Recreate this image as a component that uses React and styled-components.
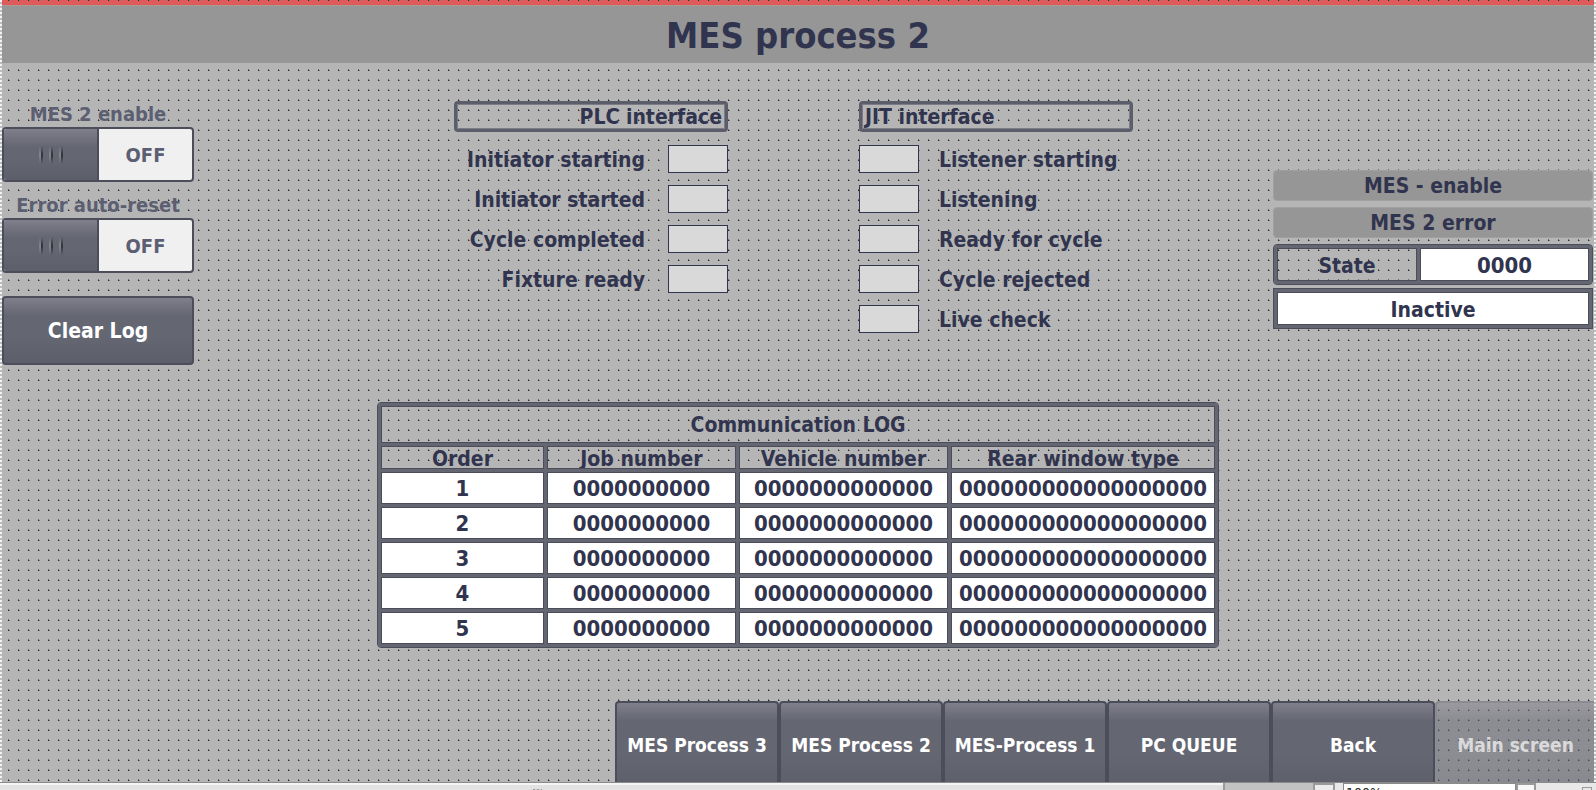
import React, { useState } from "react";
import styled, { createGlobalStyle, css } from "styled-components";

const color = {
  screen: "#b5b5b5",
  bar: "#969696",
  ink: "#31344e",
  muted: "#5c5f72",
  frame: "#646672",
  edge: "#4b4d5b",
  lamp: "#d9d9d9",
};

const dots = css`
  background-image:
    conic-gradient(at 1px 1px, transparent 75%, #2c2c2c 0),
    conic-gradient(at 2px 1px, transparent 75%, #7c7c7c 0),
    conic-gradient(at 1px 1px, transparent 75%, #6c6c6c 0);
  background-size: 10px 10px;
  background-position: 8px 0, 8px 0, 8px 9px;
`;

const steel = css`
  background: linear-gradient(#807f8b 0, #646672 18px, #646672 60%, #5c5e6a 100%);
`;

const GlobalStyle = createGlobalStyle`
  *, *::before, *::after { box-sizing: border-box; }
  body {
    margin: 0;
    font-family: "DejaVu Sans Condensed", "DejaVu Sans", sans-serif;
    font-size: 21px;
    line-height: 28px;
    font-weight: 700;
    color: ${color.ink};
    background: ${color.screen};
  }
  button, input {
    font: inherit;
  }
`;

const Screen = styled.div`
  position: relative;
  display: flex;
  flex-direction: column;
  min-height: 100vh;
  background-color: ${color.screen};
  ${dots}
  &::before,
  &::after {
    content: "";
    position: absolute;
    top: 0;
    bottom: 8px;
    width: 2px;
    background: repeating-linear-gradient(#f4f4f4 0 2px, #bcbcbc 2px 4px);
  }
  &::before { left: 0; }
  &::after { right: 0; }
`;

const AlarmStrip = styled.div`
  height: 5px;
  background-color: #df5a5a;
  ${dots}
`;

const Title = styled.h1`
  margin: 0;
  padding: 10px 0 8px;
  border-top: 1px solid #a89a90;
  background: ${color.bar};
  font-size: 36px;
  line-height: 39px;
  text-align: center;
`;

const Panels = styled.main`
  display: grid;
  grid-template-columns: 1fr auto 1fr;
  padding: 38px 3px 0 2px;
`;

const Controls = styled.section`
  display: flex;
  flex-direction: column;
  align-items: flex-start;
`;

const SwitchLabel = styled.span`
  width: 192px;
  height: 26px;
  line-height: 26px;
  text-align: center;
  font-size: 20px;
  color: ${color.muted};
`;

const Switch = styled.button`
  display: flex;
  flex-direction: ${(p) => (p.$on ? "row-reverse" : "row")};
  width: 192px;
  height: 55px;
  margin-bottom: 10px;
  padding: 0;
  border: 2px solid ${color.edge};
  border-radius: 4px;
  background: #f0f0f0;
  color: ${color.muted};
  overflow: hidden;
`;

const Thumb = styled.span`
  display: flex;
  flex: 1;
  align-self: stretch;
  align-items: center;
  justify-content: center;
  gap: 6px;
  border-right: 2px solid ${color.edge};
  ${steel}
`;

const Grip = styled.span`
  width: 4px;
  height: 18px;
  background:
    linear-gradient(#646672, transparent 50%, #616370),
    linear-gradient(90deg, #85858f 50%, #2f3038 50%);
`;

const SwitchState = styled.span`
  flex: 1;
  align-self: center;
  text-align: center;
  font-size: 20px;
`;

const SteelButton = styled.button`
  width: 192px;
  height: 69px;
  margin-top: 13px;
  padding: 0;
  border: 2px solid ${color.edge};
  border-radius: 4px;
  ${steel}
  color: #fff;
`;

const Interfaces = styled.section`
  display: grid;
  grid-template-columns: 274px 274px;
  column-gap: 131px;
  padding-right: 8px;
`;

const Signals = styled.ul`
  display: flex;
  flex-direction: column;
  gap: 12px;
  margin: 13px 0 0;
  padding: 0;
  list-style: none;
`;

const SignalTitle = styled.h2`
  margin: 0;
  height: 31px;
  padding: 0 3px;
  border: 3px solid #5c5d6b;
  border-radius: 4px;
  box-shadow: inset 0 0 0 1px #7b7c87;
  font-size: 21px;
  line-height: 26px;
  text-align: ${(p) => (p.$mirror ? "left" : "right")};
`;

const Signal = styled.li`
  display: flex;
  flex-direction: ${(p) => (p.$mirror ? "row" : "row-reverse")};
  gap: ${(p) => (p.$mirror ? "20px" : "23px")};
  height: 28px;
  line-height: 30px;
  white-space: nowrap;
`;

const Lamp = styled.span`
  width: 60px;
  height: 28px;
  border: 1px solid ${color.ink};
  background: ${color.lamp};
`;

const Status = styled.section`
  justify-self: end;
  width: 320px;
  padding-top: 69px;
  text-align: center;
`;

const Badge = styled.div`
  height: 31px;
  margin-bottom: 6px;
  border: 1px solid #a0a0a0;
  border-radius: 4px;
  background: ${color.bar};
  line-height: 31px;
`;

const framedCell = css`
  border: 1px solid ${color.edge};
  box-shadow: 0 0 0 3px ${color.frame};
  background: ${(p) => (p.$filled ? "#fff" : "transparent")};
`;

const Frame = styled.div`
  display: grid;
  grid-template-columns: ${(p) => p.$columns};
  gap: 3px;
  height: 41px;
  margin-bottom: 3px;
  padding: 3px;
  border: 1px solid ${color.edge};
  border-radius: ${(p) => (p.$square ? "0" : "4px")};
`;

const FrameCell = styled.span`
  ${framedCell}
  height: 33px;
  font-size: ${(p) => (p.$digits ? "22px" : "21px")};
  line-height: 34px;
`;

const Log = styled.table`
  width: 842px;
  margin: 37px auto 40px;
  table-layout: fixed;
  border: 1px solid ${color.edge};
  border-radius: 4px;
  border-collapse: separate;
  border-spacing: 3px;
  text-align: center;
`;

const Column = styled.col`
  width: ${(p) => p.$width}px;
`;

const LogTitle = styled.th`
  ${framedCell}
  height: 37px;
  padding: 0;
`;

const LogHead = styled.th`
  ${framedCell}
  height: 23px;
  padding: 0;
`;

const HeadText = styled.div`
  height: 21px;
  overflow: hidden;
  line-height: 24px;
`;

const LogCell = styled.td`
  ${framedCell}
  height: 32px;
  padding: 2px 0 0;
  font-size: 22px;
  line-height: 28px;
`;

const Nav = styled.nav`
  display: flex;
  justify-content: flex-end;
  height: 81px;
  margin-top: auto;
  padding-right: 2px;
  overflow: hidden;
`;

const NavButton = styled.button`
  width: ${(p) => (p.disabled ? "159px" : "164px")};
  height: 90px;
  padding: 0 0 2px;
  border: 2px solid ${color.edge};
  border-radius: 4px;
  ${steel}
  color: #fff;
  font-size: 19px;
  white-space: nowrap;
  &:disabled {
    border-right: 0;
    border-radius: 4px 0 0 0;
    border-color: #62646f;
    opacity: 0.5;
  }
`;

const EditorBar = styled.footer`
  display: flex;
  align-items: flex-start;
  height: 8px;
  border-top: 1px solid #8a8a8a;
  background: #e8e8e8;
  overflow: hidden;
`;

const ScrollTrack = styled.div`
  flex: 1;
  display: flex;
  height: 20px;
  background: #c2c2c2;
`;

const ScrollThumb = styled.div`
  display: flex;
  flex: 1;
  margin-right: 88px;
  padding: 6px 0 0 533px;
  border-right: 2px solid #9a9a9a;
  background: linear-gradient(#f5f5f5 2px, #e2e2e2 2px);
`;

const ThumbGrip = styled.span`
  width: 9px;
  height: 8px;
  background: repeating-linear-gradient(90deg, #9a9a9a 0 2px, #d0d0d0 2px 4px);
`;

const ScrollArrow = styled.button`
  width: 22px;
  height: 20px;
  margin-right: 8px;
  padding: 0;
  border: 2px solid #9a9a9a;
  background: #ececec;
`;

const Zoom = styled.input`
  width: 173px;
  height: 20px;
  padding: 0 2px;
  border: 1px solid #8a8a8a;
  background: #fff;
  color: #222;
  font-size: 14px;
  line-height: 18px;
  font-weight: 400;
`;

const ZoomStep = styled.button`
  width: 20px;
  height: 20px;
  margin-right: 46px;
  padding: 0;
  border: 2px solid #9a9a9a;
  background: #f8f8f8;
`;

const Corner = styled.span`
  width: 10px;
  height: 10px;
  margin: 4px 4px 0 0;
  border: 1px solid #9a9a9a;
`;

const plcSignals = ["Initiator starting", "Initiator started", "Cycle completed", "Fixture ready"];
const jitSignals = ["Listener starting", "Listening", "Ready for cycle", "Cycle rejected", "Live check"];
const columns = [
  { name: "Order", width: 163 },
  { name: "Job number", width: 189 },
  { name: "Vehicle number", width: 209 },
  { name: "Rear window type", width: 264 },
];
const entries = [1, 2, 3, 4, 5].map((n) => [n, "0".repeat(10), "0".repeat(13), "0".repeat(18)]);
const screens = ["MES Process 3", "MES Process 2", "MES-Process 1", "PC QUEUE", "Back"];

function ToggleSwitch({ id, label }) {
  const [on, setOn] = useState(false);
  return (
    <>
      <SwitchLabel id={id}>{label}</SwitchLabel>
      <Switch type="button" role="switch" aria-checked={on} aria-labelledby={id} $on={on} onClick={() => setOn(!on)}>
        <Thumb>
          <Grip />
          <Grip />
          <Grip />
        </Thumb>
        <SwitchState>{on ? "ON" : "OFF"}</SwitchState>
      </Switch>
    </>
  );
}

function SignalGroup({ title, signals, mirror }) {
  return (
    <div>
      <SignalTitle $mirror={mirror}>{title}</SignalTitle>
      <Signals>
        {signals.map((name) => (
          <Signal key={name} $mirror={mirror}>
            <Lamp />
            <span>{name}</span>
          </Signal>
        ))}
      </Signals>
    </div>
  );
}

export default function App() {
  return (
    <>
      <GlobalStyle />
      <Screen>
        <AlarmStrip />
        <Title>MES process 2</Title>
        <Panels>
          <Controls>
            <ToggleSwitch id="mes-enable" label="MES 2 enable" />
            <ToggleSwitch id="auto-reset" label="Error auto-reset" />
            <SteelButton type="button">Clear Log</SteelButton>
          </Controls>
          <Interfaces>
            <SignalGroup title="PLC interface" signals={plcSignals} />
            <SignalGroup title="JIT interface" signals={jitSignals} mirror />
          </Interfaces>
          <Status>
            <Badge>MES - enable</Badge>
            <Badge>MES 2 error</Badge>
            <Frame $columns="140px 1fr">
              <FrameCell>State</FrameCell>
              <FrameCell $filled $digits>0000</FrameCell>
            </Frame>
            <Frame $columns="1fr" $square>
              <FrameCell $filled>Inactive</FrameCell>
            </Frame>
          </Status>
        </Panels>
        <Log>
          <colgroup>
            {columns.map((c) => (
              <Column key={c.name} $width={c.width} />
            ))}
          </colgroup>
          <thead>
            <tr>
              <LogTitle colSpan={4}>Communication LOG</LogTitle>
            </tr>
            <tr>
              {columns.map((c) => (
                <LogHead key={c.name} scope="col">
                  <HeadText>{c.name}</HeadText>
                </LogHead>
              ))}
            </tr>
          </thead>
          <tbody>
            {entries.map((row) => (
              <tr key={row[0]}>
                {row.map((value, i) => (
                  <LogCell key={columns[i].name} $filled>
                    {value}
                  </LogCell>
                ))}
              </tr>
            ))}
          </tbody>
        </Log>
        <Nav>
          {screens.map((name) => (
            <NavButton key={name} type="button">
              {name}
            </NavButton>
          ))}
          <NavButton type="button" disabled>
            Main screen
          </NavButton>
        </Nav>
        <EditorBar>
          <ScrollTrack>
            <ScrollThumb>
              <ThumbGrip />
            </ScrollThumb>
          </ScrollTrack>
          <ScrollArrow type="button" aria-label="Scroll right" />
          <Zoom aria-label="Zoom" defaultValue="100%" />
          <ZoomStep type="button" aria-label="Zoom list" />
          <Corner />
        </EditorBar>
      </Screen>
    </>
  );
}
